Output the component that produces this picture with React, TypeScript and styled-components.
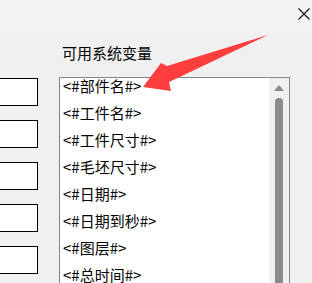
import React from 'react';
import styled, { createGlobalStyle } from 'styled-components';

const GlobalStyle = createGlobalStyle`
    html, body {
        margin: 0;
        padding: 0;
        background: #f0f0f0;
    }
    * {
        box-sizing: border-box;
    }
`;

const Window = styled.div`
    position: relative;
    width: 312px;
    height: 283px;
    overflow: hidden;
    background: #f0f0f0;
    font-family: "Noto Sans CJK SC", "Noto Sans", sans-serif;
    color: #000;
`;

const TitleBar = styled.div`
    height: 32px;
    background: #f3f3f5;
    display: flex;
    justify-content: flex-end;
    align-items: flex-start;
    padding: 8px 2px 0 0;
`;

const CloseIcon = styled.svg`
    width: 12px;
    height: 12px;
`;

const Body = styled.div`
    display: flex;
    height: 251px;
`;

const FieldColumn = styled.div`
    display: flex;
    flex-direction: column;
    gap: 14px;
    width: 68px;
    margin-left: -30px;
    padding-top: 46px;
    flex-shrink: 0;
`;

const FieldBox = styled.div`
    height: 28px;
    background: #fff;
    border: 1px solid #000;
`;

const VarPanel = styled.div`
    display: flex;
    flex-direction: column;
    margin-left: 21px;
`;

const PanelLabel = styled.div`
    margin-top: 11px;
    margin-bottom: 14px;
    padding-left: 3px;
    height: 20px;
    line-height: 20px;
    font-size: 15px;
`;

const ListBox = styled.div`
    display: flex;
    width: 231px;
    height: 240px;
    background: #fff;
    border: 1px solid #82868f;
`;

const ItemList = styled.div`
    flex: 1;
    overflow: hidden;
`;

const ItemScroll = styled.div`
    margin-top: -6px;
`;

const Item = styled.div`
    height: 27px;
    line-height: 27px;
    padding-left: 3px;
    font-size: 15px;
    white-space: nowrap;
`;

const ScrollTrack = styled.div`
    width: 20px;
    background: #f0f0f0;
    display: flex;
    flex-direction: column;
    align-items: center;
    padding-top: 7px;
    flex-shrink: 0;
`;

const ScrollArrow = styled.div`
    width: 0;
    height: 0;
    border-left: 5px solid transparent;
    border-right: 5px solid transparent;
    border-bottom: 6px solid #8a8a8a;
`;

const ScrollThumb = styled.div`
    margin-top: 7px;
    width: 8px;
    height: 300px;
    background: #8b8b8b;
    border-radius: 4px 4px 0 0;
`;

const Overlay = styled.svg`
    position: absolute;
    left: 0;
    top: 0;
    width: 312px;
    height: 283px;
    pointer-events: none;
`;

const variables = [
    '部件名',
    '工件名',
    '工件尺寸',
    '毛坯尺寸',
    '日期',
    '日期到秒',
    '图层',
    '总时间',
];

export default function App() {
    return (
        <>
            <GlobalStyle />
            <Window>
                <TitleBar>
                    <CloseIcon viewBox="0 0 12 12">
                        <path d="M0.5 0.5 L11.5 11.5 M11.5 0.5 L0.5 11.5" stroke="#111" strokeWidth="1.1" fill="none" />
                    </CloseIcon>
                </TitleBar>
                <Body>
                    <FieldColumn>
                        {[0, 1, 2, 3, 4].map(i => <FieldBox key={i} />)}
                    </FieldColumn>
                    <VarPanel>
                        <PanelLabel>可用系统变量</PanelLabel>
                        <ListBox>
                            <ItemList>
                                <ItemScroll>
                                    {variables.map(v => (
                                        <Item key={v}>{'<#' + v + '#>'}</Item>
                                    ))}
                                </ItemScroll>
                            </ItemList>
                            <ScrollTrack>
                                <ScrollArrow />
                                <ScrollThumb />
                            </ScrollTrack>
                        </ListBox>
                    </VarPanel>
                </Body>
                <Overlay viewBox="0 0 312 283">
                    <polygon
                        points="143,87 161,63 167,66 268,35 169,82 171,91"
                        fill="#fe3d3d"
                    />
                </Overlay>
            </Window>
        </>
    );
}
